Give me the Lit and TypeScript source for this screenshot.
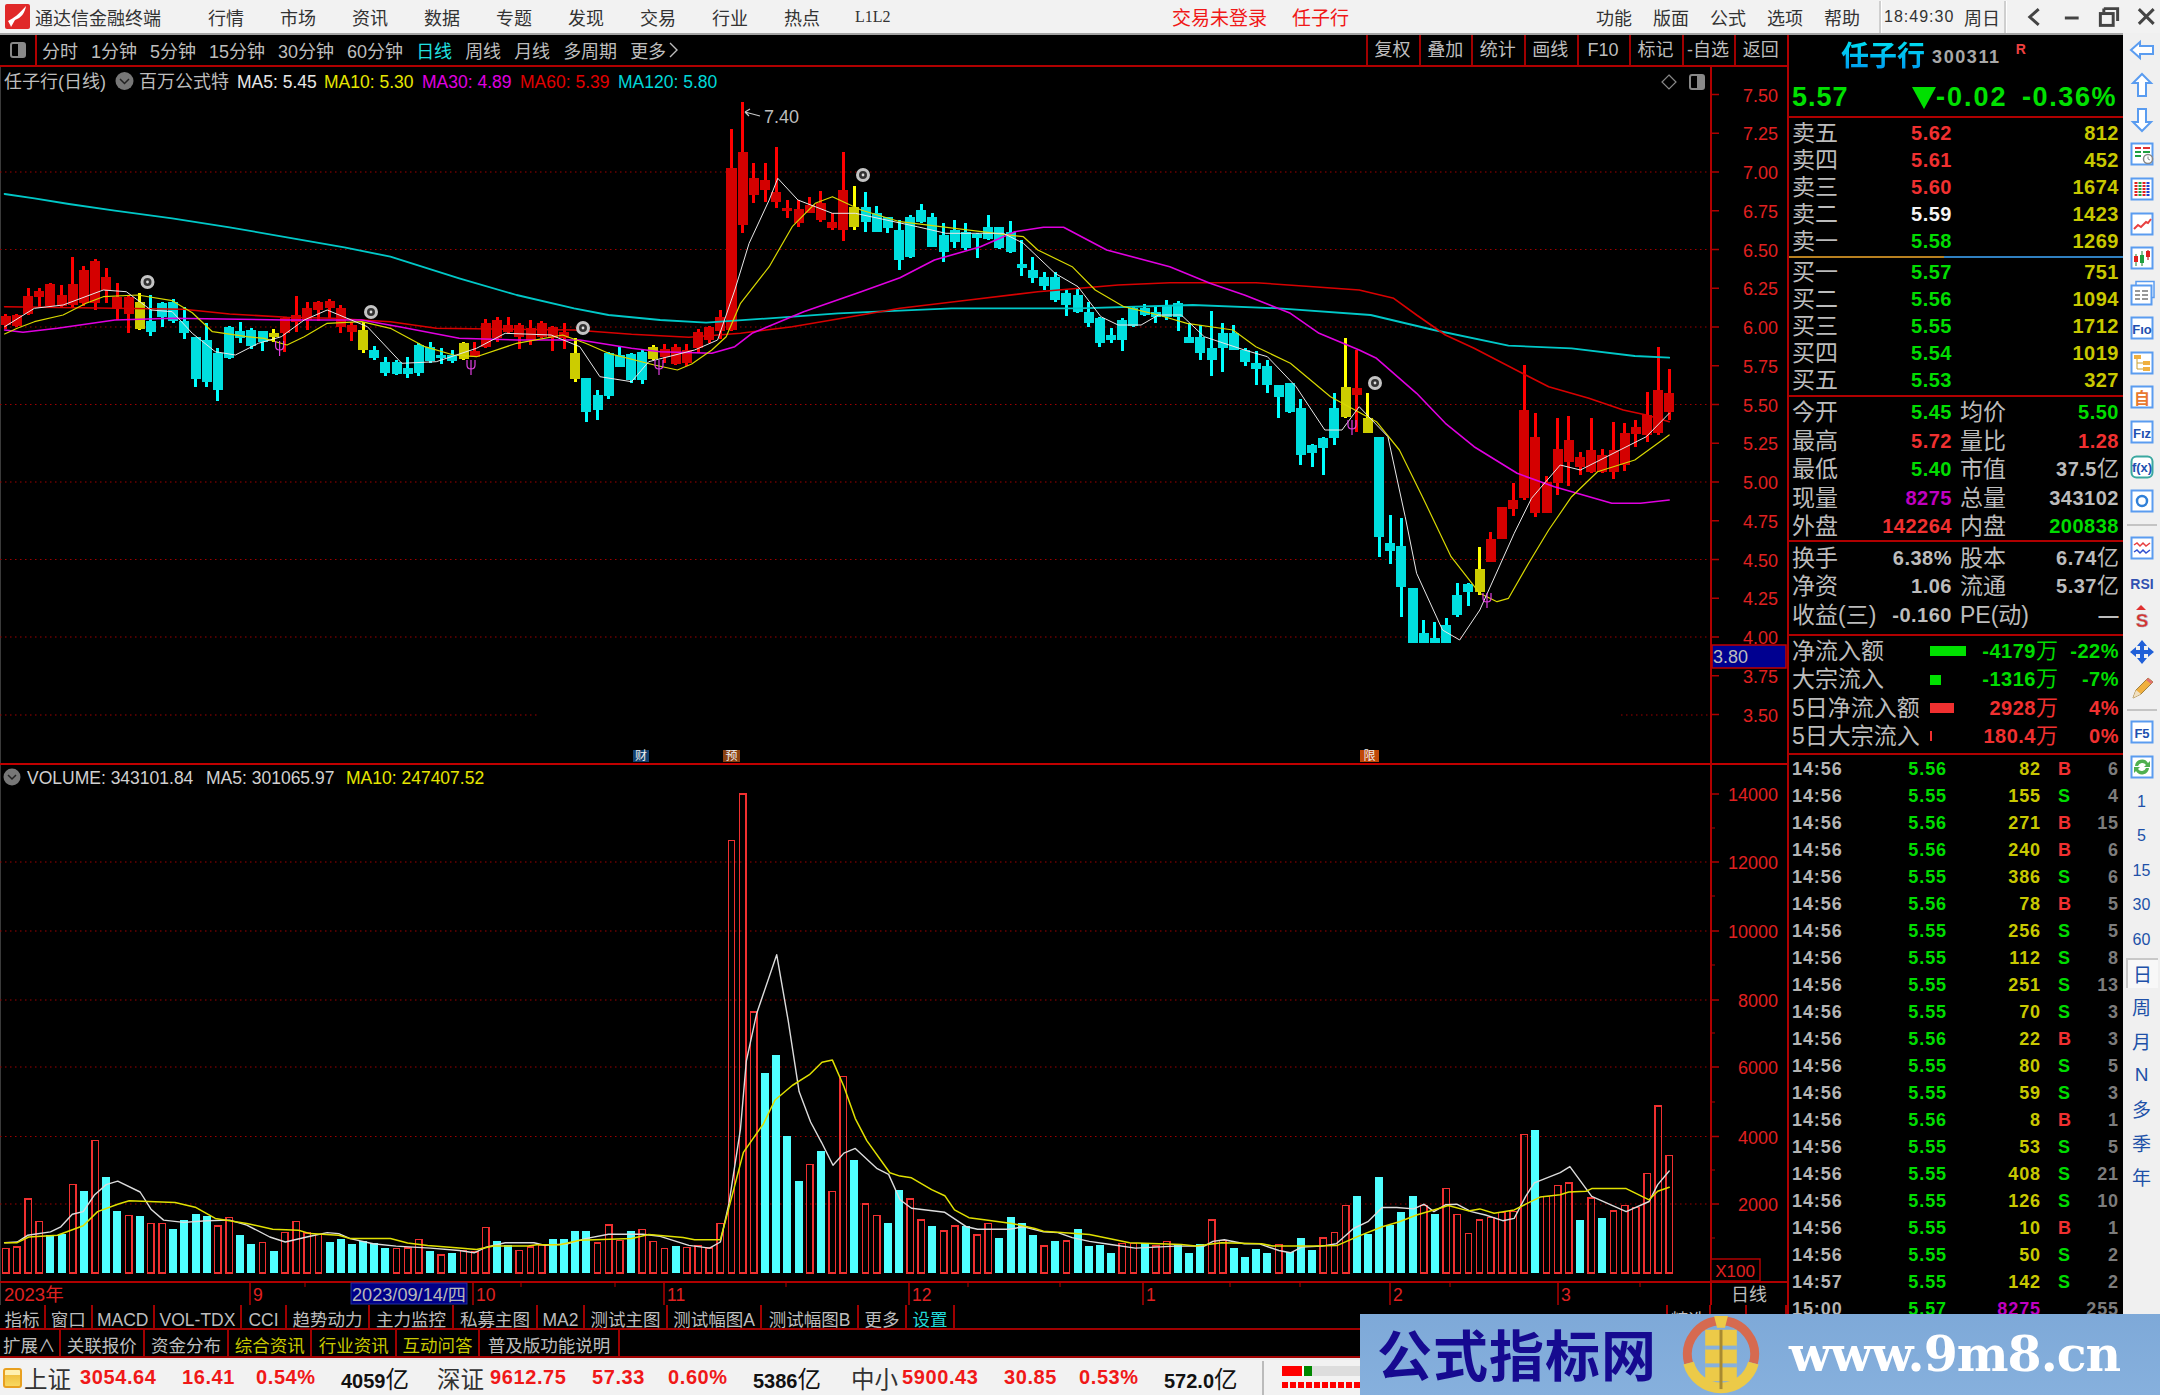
import { LitElement, html, svg, css } from "lit";
import { customElement } from "lit/decorators.js";

type Pt = [number, number];
const lx = (pts: number[], add = 0): Pt[] => {
  const o: Pt[] = [];
  for (let i = 0; i < pts.length; i += 2) o.push([pts[i] / 1.742, (pts[i + 1] + add) / 3]);
  return o;
};
const rx = (pts: number[], add = 0): Pt[] => {
  const o: Pt[] = [];
  for (let i = 0; i < pts.length; i += 2) o.push([900 + pts[i] / 1.742, (pts[i + 1] + add) / 3]);
  return o;
};
const vl = (pts: number[]): Pt[] => {
  const o: Pt[] = [];
  for (let i = 0; i < pts.length; i += 2) o.push([pts[i] / 1.742, 740 + pts[i + 1] / 2.958]);
  return o;
};
const vr = (pts: number[]): Pt[] => {
  const o: Pt[] = [];
  for (let i = 0; i < pts.length; i += 2) o.push([900 + pts[i] / 1.742, 740 + pts[i + 1] / 2.958]);
  return o;
};
const P = (a: Pt[]) => a.map((p) => p[0].toFixed(1) + "," + p[1].toFixed(1)).join(" ");

const MA120 = [
  ...lx([8,582,60,595,120,612,200,632,300,655,400,682,500,712,600,742,680,770,800,835,900,885,1000,925,1060,945,1150,960,1230,968,1280,962,1340,955,1460,940]),
  ...rx([0,932,90,925,310,925,510,915,660,925,820,945,930,990,1060,1037,1170,1045,1280,1068,1340,1073]),
];
const MA60 = [
  ...lx([8,920,200,925,320,928,400,942,500,952,580,955,680,965,760,985,1000,990,1100,1003,1200,1012,1290,1000,1380,980,1500,945]),
  ...rx([0,925,120,900,240,875,380,855,470,848,620,848,720,860,800,870,860,895,900,945,950,1005,1000,1045,1090,1125,1130,1160,1200,1195,1260,1230,1300,1245,1340,1265]),
];
const MA30 = [
  ...lx([8,990,40,997,100,985,200,960,300,955,500,960,630,960,700,982,800,1015,900,1020,1010,1020,1100,1045,1150,1055,1240,1060,1280,1040,1310,1000,1400,935,1500,875]),
  ...rx([0,833,60,780,140,740,200,695,250,682,285,682,360,750,470,800,540,850,600,885,680,940,730,1000,800,1050,830,1075,900,1180,950,1270,1000,1340,1075,1420,1140,1460,1240,1510,1290,1510,1340,1500]),
];
const MA10 = [
  ...lx([8,282,30,265,60,245,110,225,150,190,180,170,240,165,300,182,335,218,370,275,430,290,460,295,500,315,530,290,570,250,630,245,680,265,740,320,790,345,830,350,900,310,980,285,1020,310,1060,340,1140,375,1180,390,1205,372,1240,330,1265,290,1290,190,1340,80,1380,-40,1420,-110,1450,-130,1500,-90], 720),
  ...rx([0,-55,215,-10,240,30,300,80,340,150,390,200,450,225,500,250,580,270,620,320,680,370,750,470,830,545,870,630,910,770,960,950,1010,1060,1040,1085,1060,1075,1095,970,1130,870,1170,770,1215,695,1280,660,1340,585], 720),
];
const MA5 = [
  ...lx([8,260,60,205,110,195,180,150,220,155,263,210,300,215,335,280,375,335,410,345,450,310,490,290,530,240,570,210,640,260,700,370,760,365,830,325,880,280,960,285,1010,320,1045,410,1100,425,1130,365,1210,330,1250,300,1280,150,1305,10,1340,-120,1355,-185,1390,-120,1450,-80,1490,-80], 720),
  ...rx([30,-40,80,-20,180,-20,215,10,270,100,310,140,350,230,380,255,420,255,450,225,490,225,530,290,600,330,640,350,690,440,740,570,770,570,800,500,850,590,880,830,900,1000,945,1170,975,1200,1010,1110,1070,880,1100,775,1150,675,1185,690,1300,590,1340,520], 720),
];
const VMA5 = [
  ...vl([8,1487,30,1485,48,1465,88,1455,106,1440,126,1403,145,1395,165,1345,185,1315,205,1305,244,1337,263,1388,285,1420,320,1427,360,1422,400,1420,430,1435,470,1470,497,1485,540,1468,570,1457,590,1460,610,1475,650,1490,690,1497,720,1500,750,1503,800,1510,826,1517,847,1500,880,1487,930,1487,950,1495,990,1490,1020,1475,1060,1462,1120,1462,1150,1468,1200,1495,1236,1503,1255,1485,1270,1370,1290,1150,1300,950,1318,810,1353,635,1373,830,1392,1040,1412,1130,1431,1190,1451,1258,1470,1222,1490,1208,1528,1268,1548,1285]),
  ...vr([0,1360,20,1385,78,1397,116,1440,135,1447,190,1447,215,1440,250,1455,275,1457,300,1472,330,1483,370,1493,410,1503,480,1497,530,1497,545,1483,565,1478,600,1490,625,1490,660,1510,680,1517,700,1500,735,1497,760,1490,790,1445,815,1425,840,1383,865,1383,895,1387,913,1373,930,1395,950,1375,970,1373,995,1395,1020,1405,1050,1422,1070,1415,1090,1350,1105,1310,1150,1280,1167,1262,1205,1350,1265,1395,1305,1365,1320,1315,1340,1275]),
];
const VMA10 = [
  ...vl([8,1487,30,1487,50,1470,100,1465,145,1437,170,1395,205,1373,225,1363,305,1368,340,1382,375,1415,430,1430,475,1447,520,1450,540,1460,590,1465,610,1475,680,1475,710,1488,745,1495,800,1503,830,1507,860,1497,920,1497,935,1493,975,1493,1010,1480,1100,1475,1130,1463,1190,1472,1210,1478,1255,1478,1275,1350,1295,1220,1330,1135,1350,1065,1380,1022,1410,990,1432,953,1450,947,1470,1025,1490,1120,1510,1185,1550,1280]),
  ...vr([0,1290,20,1295,55,1330,78,1348,95,1390,120,1413,150,1420,195,1430,235,1445,250,1453,330,1463,400,1487,490,1492,515,1497,560,1487,630,1490,650,1497,720,1497,762,1495,800,1467,840,1440,870,1425,900,1405,940,1385,955,1377,990,1393,1010,1387,1035,1400,1070,1390,1090,1373,1115,1352,1150,1345,1165,1337,1195,1335,1205,1327,1265,1327,1305,1360,1320,1335,1340,1323]),
];

// type, wick top, body top, body bottom, wick bottom
const CANDLES: [string, number, number, number, number][] = [
  ["r",222,228,255,268],["r",222,225,258,260],["r",143,167,222,226],["r",145,152,172,200],["r",130,132,198,200],
  ["r",135,165,198,205],["r",50,132,195,205],["r",78,90,190,198],["r",58,62,188,210],["r",85,110,150,190],
  ["r",130,170,208,240],["r",165,170,222,280],["y",160,185,268,270],["c",165,243,275,288],["c",185,190,230,262],
  ["c",178,185,242,248],["c",200,243,280,298],["c",290,292,418,440],["c",250,300,425,440],["c",325,338,450,482],
  ["c",258,260,355,358],["c",247,273,295,310],["c",265,270,318,327],["c",272,272,305,332],["y",268,280,290,305],
  ["r",232,235,280,335],["r",168,225,245,275],["r",185,205,240,270],["r",183,185,210,242],["r",178,182,205,235],
  ["r",195,205,262,278],["r",245,255,275,302],["y",245,270,330,340],["c",317,330,355,360],["c",352,365,400,408],
  ["c",360,365,403,405],["c",352,385,403,413],["c",308,315,400,408],["c",307,320,362,370],["c",325,345,355,372],
  ["c",330,345,362,368],["y",307,310,358,360],["r",305,333,350,352],["r",237,250,320,325],["r",230,240,295,305],
  ["r",230,255,275,280],["r",250,255,290,328],["r",240,265,300,315],["r",243,250,290,295],["r",258,262,295,332],
  ["r",248,275,295,328],["y",293,340,418,425],["c",415,415,515,545],["c",450,465,510,540],["c",335,340,468,478],
  ["c",320,345,380,382],["c",340,342,420,428],["c",330,335,420,432],["y",315,320,358,360],["r",312,328,352,370],
  ["r",312,322,372,375],["r",312,330,370,378],["r",268,275,325,340],["r",258,262,300,308],["r",210,230,272,298],
  ["r",-332,-215,270,272],["r",-415,-265,-45,-20],["r",-230,-185,-135,-110],["r",-230,-180,-150,-115],["r",-280,-145,-115,-95],
  ["r",-120,-96,-86,-65],["r",-120,-92,-52,-40],["r",-130,-105,-80,-80],["r",-148,-110,-60,-55],["r",-80,-55,-35,-30],
  ["r",-265,-150,-30,2],["y",-162,-100,-40,-30],["c",-145,-100,-55,-25],["c",-102,-80,-25,-25],["c",-70,-70,-35,-20],
  ["c",-60,-30,60,90],["c",-75,-70,50,55],["c",-108,-90,-55,-50],["c",-80,-70,20,20],["c",-50,-15,35,65],
  ["c",-60,-30,5,25],["c",-50,-25,25,30],["c",-20,-17,-5,53],["c",-75,-40,-3,0],["c",-40,-38,25,28],
  ["c",-58,-25,35,40],["c",0,72,85,108],["c",50,90,115,130],["c",95,110,138,150],["c",95,112,180,185],
  ["c",150,160,195,228],["c",145,165,215,218],["c",185,215,250,260],["c",230,235,310,320],["c",265,285,300,310],
  ["c",235,240,300,332],["c",200,205,258,260],["c",192,205,225,228],["c",200,215,230,248],["c",180,198,230,240],
  ["c",183,188,230,272],["c",250,292,308,310],["c",255,290,340,360],["c",212,325,360,408],["c",248,280,325,395],
  ["c",255,278,330,330],["c",325,330,365,378],["c",332,370,388,435],["c",360,378,435,458],["c",435,435,472,535],
  ["c",428,430,515,518],["c",478,505,645,675],["c",612,615,640,680],["c",590,595,625,705],["c",460,505,595,615],
  ["y",293,442,532,535],["r",330,445,465,575],["y",460,535,578,580],["c",590,592,892,950],["c",825,908,932,972],
  ["c",833,918,1040,1130],["c",1045,1045,1210,1210],["c",1140,1180,1210,1210],["c",1145,1195,1210,1210],["c",1135,1155,1210,1210],
  ["c",1028,1065,1125,1130],["c",1028,1033,1055,1097],["y",922,988,1055,1065],["r",875,898,965,965],["r",802,802,898,898],
  ["r",730,780,808,828],["r",375,510,775,780],["r",518,592,820,830],["r",708,725,818,820],["r",535,628,730,765],
  ["r",528,600,665,738],["r",635,650,680,705],["r",535,630,695,700],["r",628,645,695,700],["r",545,630,695,718],
  ["r",550,578,675,692],["r",540,562,582,622],["r",455,525,585,605],["r",320,450,578,585],["r",388,460,515,540],
];
const VOL = [68,73,215,148,-108,-113,258,-238,388,-281,-180,166,-166,143,143,-126,-153,-171,-166,135,160,-109,-83,86,-60,116,148,115,110,-87,-96,-83,-90,-85,-70,68,70,95,-60,50,-55,63,58,130,-90,-78,63,73,78,-96,-96,-121,-121,85,138,93,-121,125,90,68,-76,71,76,70,143,1275,1413,768,-588,-641,-401,-268,317,-357,237,578,-330,200,166,-143,-243,215,153,-135,121,135,-135,108,143,-101,-163,-145,-110,76,-91,91,-126,-75,-78,-56,83,83,-86,76,90,-83,-56,-83,153,93,-70,-43,-68,-56,81,-58,-101,-65,100,116,195,-225,-113,-281,-138,-176,-225,195,-171,246,170,113,153,161,175,178,406,-420,223,255,263,-153,218,-158,180,195,190,290,490,343];

const X = (i: number) => 5.8 + 11.165 * i;
const Y = (v: number) => 240 + v / 3;
const PY = (p: number) => 172 + (7 - p) * 155;
const MAIN_LABELS = [7.5,7.25,7,6.75,6.5,6.25,6,5.75,5.5,5.25,5,4.75,4.5,4.25,4,3.75,3.5];
const MAIN_GRID = [7,6.5,6,5.5,5,4.5,4];
const VOL_LABELS: [string, number][] = [["14000",794],["12000",862],["10000",931],["8000",1000],["6000",1067],["4000",1136.5],["2000",1204]];
const DATE_MAJOR: [string, number][] = [["9",250],["10",473],["11",664],["12",909],["1",1143],["2",1390],["3",1558]];
const DATE_MINOR = [305,422,521,615,786,968,1060,1230,1300,1450,1640];
const RINGS: Pt[] = [[147.5,282],[371,312],[583,328],[863,175],[1375,383]];
const PSI: Pt[] = [[279.6,348],[471,367],[659,367],[1352,427],[1487,600]];

const MENU = ["行情","市场","资讯","数据","专题","发现","交易","行业","热点"];
const TOOLS: [string, boolean][] = [["分时",false],["1分钟",false],["5分钟",false],["15分钟",false],["30分钟",false],["60分钟",false],["日线",true],["周线",false],["月线",false],["多周期",false]];
const TOOLS_R = ["复权","叠加","统计","画线","F10","标记","-自选","返回"];
const TAB1: [string, number, string][] = [["指标",46,""],["窗口",46.5,""],["MACD",62.5,""],["VOL-TDX",87,""],["CCI",45,""],["趋势动力",83,""],["主力监控",84,""],["私募主图",84,""],["MA2",47,""],["测试主图",83,""],["测试幅图A",94,""],["测试幅图B",97,""],["更多",48,""],["设置",48,"cy"]];
const TAB2: [string, number, string][] = [["扩展∧",60.6,""],["关联报价",84.4,""],["资金分布",84,""],["综合资讯",83.5,"ye"],["行业资讯",84.5,"ye"],["互动问答",83,"ye"],["普及版功能说明",140,""]];
const SELL: [string,string,string,string][] = [["卖五","5.62","r","812"],["卖四","5.61","r","452"],["卖三","5.60","r","1674"],["卖二","5.59","w","1423"],["卖一","5.58","g","1269"]];
const BUY: [string,string,string,string][] = [["买一","5.57","g","751"],["买二","5.56","g","1094"],["买三","5.55","g","1712"],["买四","5.54","g","1019"],["买五","5.53","g","327"]];
const STATS: string[][] = [["今开","5.45","g","均价","5.50","g"],["最高","5.72","r","量比","1.28","r"],["最低","5.40","g","市值","37.5亿","s"],["现量","8275","m","总量","343102","s"],["外盘","142264","r","内盘","200838","g"]];
const STATS2: string[][] = [["换手","6.38%","s","股本","6.74亿","s"],["净资","1.06","s","流通","5.37亿","s"],["收益(三)","-0.160","s","PE(动)","—","s"]];
const FLOW: [string,number,string,string,string][] = [["净流入额",36,"g","-4179万","-22%"],["大宗流入",11,"g","-1316万","-7%"],["5日净流入额",24,"r","2928万","4%"],["5日大宗流入",2,"r","180.4万","0%"]];
const T1 = "14:56";
const TICKS: [string,string,string,string,string][] = [
  [T1,"5.56","82","B","6"],[T1,"5.55","155","S","4"],[T1,"5.56","271","B","15"],[T1,"5.56","240","B","6"],[T1,"5.55","386","S","6"],
  [T1,"5.56","78","B","5"],[T1,"5.55","256","S","5"],[T1,"5.55","112","S","8"],[T1,"5.55","251","S","13"],[T1,"5.55","70","S","3"],
  [T1,"5.56","22","B","3"],[T1,"5.55","80","S","5"],[T1,"5.55","59","S","3"],[T1,"5.56","8","B","1"],[T1,"5.55","53","S","5"],
  [T1,"5.55","408","S","21"],[T1,"5.55","126","S","10"],[T1,"5.55","10","B","1"],[T1,"5.55","50","S","2"],["14:57","5.55","142","S","2"],["15:00","5.57","8275","","255"],
];
const BLUE = "#5a9cf0";
const frame = (inner: unknown) => svg`<rect x="3.5" y="3.5" width="21" height="21" fill="#fff" stroke=${BLUE} stroke-width="2"/>${inner}`;
const ICONS: unknown[] = [
  svg`<path d="M3 14 L12 6 V10 H25 V18 H12 V22 Z" fill="#fff" stroke=${BLUE} stroke-width="2"/>`,
  svg`<path d="M14 3 L23 12 H18 V25 H10 V12 H5 Z" fill="#fff" stroke=${BLUE} stroke-width="2"/>`,
  svg`<path d="M14 25 L23 16 H18 V3 H10 V16 H5 Z" fill="#fff" stroke=${BLUE} stroke-width="2"/>`,
  frame(svg`<path d="M7 8h6M15 8h7" stroke="#e03030" stroke-width="2"/><path d="M7 12h6M15 12h7" stroke="#20a040" stroke-width="2"/><path d="M7 16h6" stroke="#20a040" stroke-width="2"/><circle cx="20" cy="19" r="4.5" fill="#fff" stroke="#888" stroke-width="1.5"/><path d="M20 16.5V19l2 1" stroke="#888" fill="none"/>`),
  frame(svg`<path d="M8 7v14" stroke="#e02020" stroke-width="3" stroke-dasharray="2 1"/><path d="M12 7v14" stroke="#20a040" stroke-width="3" stroke-dasharray="2 1"/><path d="M16 7v14" stroke="#e02020" stroke-width="3" stroke-dasharray="2 1"/><path d="M20 7v14" stroke="#2040d0" stroke-width="3" stroke-dasharray="2 1"/>`),
  frame(svg`<path d="M6 19 L10 15 L13 17 L18 12 L20 13 L23 9" fill="none" stroke="#e84040" stroke-width="2"/>`),
  frame(svg`<path d="M8 10v12M14 7v15" stroke="#208030"/><rect x="6" y="12" width="4" height="6" fill="#e02020"/><rect x="12" y="11" width="4" height="8" fill="#20a040"/><path d="M20 6v10" stroke="#a00"/><rect x="18" y="7" width="4" height="6" fill="#e02020"/>`),
  svg`<rect x="8" y="2.5" width="18" height="16" fill="#fff" stroke=${BLUE} stroke-width="1.5"/><rect x="3.5" y="6.5" width="20" height="19" fill="#fff" stroke=${BLUE} stroke-width="2"/><path d="M7 12h5M14 12h6M7 16h5M14 16h6M7 20h5M14 20h6" stroke="#777" stroke-width="1.5"/>`,
  frame(svg`<text x="14" y="19.5" class="ic" text-anchor="middle">Fıo</text>`),
  frame(svg`<path d="M9 9v11h6M9 14h6" stroke="#c9a030" fill="none"/><rect x="6" y="6" width="7" height="4" fill="#f0b040"/><rect x="15" y="12" width="7" height="4" fill="#f0b040"/><rect x="15" y="18" width="7" height="4" fill="#f0b040"/>`),
  frame(svg`<text x="14" y="20.5" class="iz" text-anchor="middle">自</text>`),
  frame(svg`<text x="14" y="19.5" class="ic" text-anchor="middle">Fız</text>`),
  svg`<rect x="3.5" y="3.5" width="21" height="21" rx="5" fill="#fff" stroke="#3aa8a0" stroke-width="2"/><text x="14" y="19" class="ic" text-anchor="middle">f(x)</text>`,
  frame(svg`<circle cx="14" cy="14" r="5" fill="none" stroke="#3080d8" stroke-width="2.5"/>`),
  null,
  frame(svg`<path d="M6 11 L9 9 L12 12 L15 9 L18 12 L22 9" fill="none" stroke="#e84040" stroke-width="1.5"/><path d="M6 18 L9 16 L12 19 L15 16 L18 19 L22 16" fill="none" stroke="#3050d0" stroke-width="1.5"/>`),
  svg`<text x="14" y="20" class="ir" text-anchor="middle">RSI</text>`,
  svg`<path d="M13 2 L18 7 H8 Z" fill="#e03030"/><text x="14" y="24" class="is" text-anchor="middle">S</text>`,
  svg`<path d="M14 2 L19 8 H16 V12 H20 V9 L26 14 L20 19 V16 H16 V20 H19 L14 26 L9 20 H12 V16 H8 V19 L2 14 L8 9 V12 H12 V8 H9 Z" fill="#2060d8"/>`,
  svg`<path d="M5 25 L8 17 L20 5 L25 9 L13 21 Z" fill="#f0b040" stroke="#a08040"/><path d="M5 25 L8 17 L13 21 Z" fill="#f0e0c0"/><path d="M20 5 L25 9 L23 11 L18 7 Z" fill="#e07070"/>`,
  null,
  frame(svg`<text x="14" y="19.5" class="ic" text-anchor="middle">F5</text>`),
  frame(svg`<path d="M7 13 A7 7 0 0 1 20 10 L22 8 V14 H16 L18 12 A4.5 4.5 0 0 0 10 13 Z" fill="#50b050"/><path d="M21 15 A7 7 0 0 1 8 18 L6 20 V14 H12 L10 16 A4.5 4.5 0 0 0 18 15 Z" fill="#50b050"/>`),
];

const logoArc = (r: number, a0: number, a1: number) => {
  const rad = (d: number) => (d * Math.PI) / 180;
  const x0 = 40 + r * Math.cos(rad(a0)), y0 = 41 + r * Math.sin(rad(a0));
  const x1 = 40 + r * Math.cos(rad(a1)), y1 = 41 + r * Math.sin(rad(a1));
  return `M${x0.toFixed(1)} ${y0.toFixed(1)} A${r} ${r} 0 ${Math.abs(a1 - a0) > 180 ? 1 : 0} 1 ${x1.toFixed(1)} ${y1.toFixed(1)}`;
};

@customElement("app-root")
export class AppRoot extends LitElement {
  static styles = css`
    :host { display: block; position: relative; width: 2160px; height: 1395px; overflow: hidden; background: #000;
      font-family: "Liberation Sans", "Noto Sans CJK SC", sans-serif; }
    .title { height: 33px; border-bottom: 2px solid #a4a4a4; background: #f2f2f2; display: flex; align-items: center; color: #333; font-size: 18px; white-space: nowrap; overflow: hidden; }
    .logo { margin-left: 5px; width: 25px; height: 25px; flex: none; }
    .appname { margin-left: 5px; width: 173px; flex: none; }
    .menu { display: flex; gap: 36px; flex: none; }
    .menu span { width: 36px; }
    .l12 { margin-left: 35px; font-family: "Liberation Serif", serif; font-size: 16px; width: 36px; flex: none; }
    .cen { margin-left: 281px; color: #f01818; font-size: 19px; width: 95px; flex: none; }
    .cen2 { margin-left: 25px; color: #f01818; font-size: 19px; width: 57px; flex: none; }
    .rm { margin-left: 247px; display: flex; gap: 21px; flex: none; }
    .rm span { width: 36px; }
    .vsep { width: 2px; height: 32px; background: #cfcfcf; margin-left: 19px; border-right: 1px solid #fff; flex: none; }
    .clock { margin-left: 2px; width: 80px; font-size: 16px; letter-spacing: 1px; flex: none; }
    .wk { width: 36px; flex: none; }
    .vsep2 { margin-left: 4px; }
    .win { width: 37.5px; height: 28px; flex: none; }
    .w1 { margin-left: 8px; }
    .main { display: flex; height: 1323px; }
    .left { width: 1787px; flex: none; display: flex; flex-direction: column; }
    .toolbar { height: 30px; border-bottom: 2px solid #b00000; display: flex; align-items: center; color: #bdbdbd; font-size: 18px; white-space: nowrap; }
    .tbicon { width: 35px; height: 30px; border-right: 2px solid #b00000; display: flex; align-items: center; justify-content: center; flex: none; }
    .tbicon i { display: block; width: 16px; height: 16px; border: 2px solid #888; border-radius: 3px; box-sizing: border-box; background: linear-gradient(90deg, #000 50%, #888 50%); }
    .tools { display: flex; gap: 13px; margin-left: 5px; align-items: center; }
    .tools .on { color: #20e0e0; }
    .tools .more { display: flex; align-items: center; gap: 3px; }
    .tools .more svg { width: 9px; height: 18px; }
    .toolsr { margin-left: auto; display: flex; height: 100%; }
    .toolsr span { width: 52.6px; box-sizing: border-box; border-left: 2px solid #a00000; padding-right: 2px; text-align: center; line-height: 30px; }
    .chart { display: block; width: 1787px; height: 1238px; flex: none; }
    .tabs { display: flex; color: #bdbdbd; font-size: 17.5px; border-bottom: 2px solid #a00000; white-space: nowrap; box-sizing: border-box; }
    .t1 { height: 25px; line-height: 30px; }
    .t2 { height: 28px; line-height: 33px; }
    .tabs span { box-sizing: border-box; border-right: 2px solid #a00000; text-align: center; flex: none; }
    .tabs .cy { color: #20d8d8; }
    .tabs .ye { color: #c8c800; }
    .tabs .gapl { margin-left: auto; border-left: 2px solid #a00000; }
    .panel { width: 336px; flex: none; box-sizing: border-box; border-left: 2px solid #b00000; height: 100%; overflow: hidden; color: #bcbcbc; font-size: 23px; white-space: nowrap; }
    .hd { height: 81px; border-bottom: 2px solid #b00000; display: flex; flex-direction: column; }
    .nm { height: 43px; box-sizing: border-box; padding: 0 0 5px 52px; display: flex; align-items: center; }
    .nm b { font-size: 28px; background: linear-gradient(180deg, #00f0f0, #0090f0); -webkit-background-clip: text; background-clip: text; color: transparent; }
    .nm em { font-style: normal; font-weight: bold; font-size: 18px; letter-spacing: 1.6px; color: #a8a8a8; margin: 6px 0 0 7px; }
    .nm sup { font-size: 14px; font-weight: bold; color: #f04040; margin: -10px 0 0 15px; line-height: 1; }
    .pr { display: flex; align-items: center; color: #00e000; font-weight: bold; font-size: 27px; padding-left: 3px; height: 37px; margin-top: 1px; }
    .pr .a { width: 120px; letter-spacing: 1px; flex: none; }
    .pr .b { width: 24px; height: 22px; flex: none; }
    .pr .b svg { display: block; width: 24px; height: 22px; }
    .pr .c { width: 86px; letter-spacing: 2px; flex: none; }
    .pr .d { letter-spacing: 1.6px; flex: none; }
    .num { font-weight: bold; font-size: 20px; letter-spacing: .5px; }
    .num .u { font-weight: normal; font-size: 22px; letter-spacing: 0; }
    .book { padding-left: 3px; }
    .bs1 { padding-top: 2px; padding-bottom: 1px; }
    .bs2 { padding-top: .5px; padding-bottom: 1.5px; }
    .br { display: grid; grid-template-columns: 60px 100px 1fr; height: 27px; line-height: 27px; padding-right: 4px; }
    .v { text-align: right; }
    .line1 { height: 2px; background: linear-gradient(90deg, #b88020 0 155px, #3080c0 155px); }
    .redl { height: 2px; background: #b00000; }
    .st { padding-left: 3px; padding-right: 4px; }
    .sr { display: grid; grid-template-columns: 60px 100px 68px 1fr; height: 28.6px; line-height: 30.6px; }
    .sr .l2 { padding-left: 8px; }
    .st2 .sr { height: 28.5px; line-height: 30px; }
    .st2 { height: 92px; padding-top: 1px; box-sizing: border-box; }
    .fl { padding: 0 4px 0 3px; height: 117px; box-sizing: border-box; }
    .fr { display: grid; grid-template-columns: 138px 128px 1fr; height: 28.4px; line-height: 30.4px; }
    .fv { display: flex; align-items: center; justify-content: space-between; }
    .fv i { display: block; height: 10px; }
    .ticks { padding: 1px 4px 0 3px; font-weight: bold; font-size: 18px; }
    .tr { display: grid; grid-template-columns: 115px 40px 94px 38px 40px; height: 27px; line-height: 27px; letter-spacing: .9px; }
    .tr .tm { color: #b4b4b4; }
    .tr .bs { padding-left: 17px; }
    .tr .ct { text-align: right; color: #7c7c7c; }
    .g { color: #00dc00; } .r { color: #f03030; } .w { color: #f4f4f4; } .m { color: #c000c0; } .s { color: #bcbcbc; } .y { color: #c8c800; }
    .side { width: 37px; flex: none; background: #f0f0f0; display: flex; flex-direction: column; align-items: center; margin-top: -2px; color: #2050a8; }
    .si { height: 34.7px; width: 37px; flex: none; display: flex; align-items: center; justify-content: center; }
    .si svg { width: 28px; height: 28px; }
    .sp1 { height: 12px; flex: none; width: 30px; display: flex; align-items: center; }
    .sp2 { height: 11px; flex: none; width: 30px; display: flex; align-items: center; }
    .sp1::before, .sp2::before { content: ""; display: block; width: 100%; height: 2px; background: #c4c4c4; }
    .sn { font-size: 16px; height: 34.5px; }
    .sc { font-size: 19px; height: 34px; }
    .sday { margin-top: 1px; height: 30px; width: 32px; border-top: 2px solid #c8c8c8; border-left: 2px solid #c8c8c8; box-sizing: border-box; margin-bottom: 2px; background: #f8f8f8; }
    .ic { font: 700 13px "Liberation Sans", sans-serif; fill: #2050b0; }
    .iz { font: 700 16px "Noto Sans CJK SC", sans-serif; fill: #e87830; }
    .ir { font: 700 14px "Liberation Sans", sans-serif; fill: #3050b0; }
    .is { font: 700 19px "Liberation Sans", sans-serif; fill: #d83030; stroke: #aaa; stroke-width: .4px; }
    .status { height: 37px; box-sizing: border-box; border-top: 2px solid #e8e8e8; background: #f2f2f2; display: flex; align-items: center; color: #222; white-space: nowrap; }
    .sti { margin-left: 3px; width: 19px; height: 20px; box-sizing: border-box; flex: none; border: 2px solid #e8a020; border-radius: 3px; background: linear-gradient(#fff0b0 30%, #f0c040 30%, #f8d860); margin-right: 2px; }
    .status span { flex: none; display: block; }
    .status .cjk { font-size: 23.5px; color: #333; }
    .status .rn { font-size: 20px; font-weight: bold; letter-spacing: .6px; color: #f01818; }
    .status .bk { font-size: 20px; font-weight: bold; color: #111; }
    .status .bk u { text-decoration: none; font-size: 23.5px; font-weight: normal; }
    .status .bar { width: 2px; height: 34px; background: #bbb; margin-left: 0; }
    .status .ind { margin-left: 18px; width: 90px; height: 24px; background: linear-gradient(90deg, #f00 0 20px, #fff 20px 22px, #080 22px 30px, #ddd 30px) 0 0 / 100% 10px no-repeat, repeating-linear-gradient(90deg, #f00 0 6px, #f2f2f2 6px 8px) 0 16px / 100% 6px no-repeat; }
    .wm { position: absolute; left: 1360px; top: 1314px; width: 800px; height: 81px; background: linear-gradient(180deg, #7ea9d8, #86b0dd); display: flex; align-items: center; white-space: nowrap; }
    .wmt { margin: -4px 0 0 17px; width: 290px; font: 700 55px "Noto Sans CJK SC", sans-serif; color: #160a90; letter-spacing: 1px; line-height: 81px; }
    .wmi { width: 80px; height: 81px; flex: none; margin-left: 14px; }
    .wmu { margin: -2px 0 0 28px; font: 700 49px "DejaVu Serif", serif; color: #fff; letter-spacing: -1px; }
    .tm-lbl { font: 18px "Liberation Sans", "Noto Sans CJK SC", sans-serif; fill: #bdbdbd; }
    .ln { fill: none; stroke-linejoin: round; stroke-linecap: round; }
    .ax { font: 18px "Liberation Sans", sans-serif; fill: #e02020; }
    .lb { font: 17.5px "Liberation Sans", "Noto Sans CJK SC", sans-serif; }
    .tag { font: 12px "Noto Sans CJK SC", sans-serif; fill: #eee; }
  `;

  private num(s: string) {
    const m = s.match(/^(.*?)([亿万])$/);
    return m ? html`${m[1]}<span class="u">${m[2]}</span>` : s;
  }

  private chart() {
    const bars = CANDLES.map((c, i) => {
      const [t, wt, bt, bb, wb] = c;
      const x = X(i);
      const wc = t === "r" ? "#ff0000" : t === "c" ? "#00ffff" : "#ffff00";
      const bc = t === "r" ? "#d40000" : t === "c" ? "#00dede" : "#cccc00";
      const bw = t === "r" && i === 65 ? 11 : 10;
      const wick = Math.min(Y(wb), 643);
      const btY = Y(bt);
      const bbY = Math.min(Y(bb), 643);
      return svg`<rect x=${x - 1.5} y=${Y(wt)} width="3" height=${Math.max(wick - Y(wt), 1)} fill=${wc}/><rect x=${x - bw / 2} y=${btY} width=${bw} height=${Math.max(bbY - btY, 2)} fill=${bc}/>`;
    });
    const vols = VOL.map((v, i) => {
      const top = 1271.7 - Math.abs(v) * 0.338;
      const h = 1273 - top;
      const x = X(i);
      return v > 0
        ? svg`<rect x=${x - 3.2} y=${top} width="6.4" height=${h} fill="none" stroke="#f03030" stroke-width="1.4"/>`
        : svg`<rect x=${x - 4} y=${top} width="8" height=${h} fill="#50ffff"/>`;
    });
    return svg`
      <svg class="chart" viewBox="0 67 1787 1238" xmlns="http://www.w3.org/2000/svg">
        <line x1="0.5" y1="67" x2="0.5" y2="1305" stroke="#3a3a3a"/>
        ${MAIN_GRID.map((p) => svg`<line x1="0" x2="1711" y1=${PY(p)} y2=${PY(p)} stroke="#a00000" stroke-dasharray="1.5 3.5"/>`)}
        <line x1="0" x2="537" y1="715" y2="715" stroke="#a00000" stroke-dasharray="1.5 3.5"/>
        <line x1="1621" x2="1711" y1="715" y2="715" stroke="#a00000" stroke-dasharray="1.5 3.5"/>
        ${[862,931,1000,1067,1136.5,1204].map((y) => svg`<line x1="0" x2="1711" y1=${y} y2=${y} stroke="#a00000" stroke-dasharray="1.5 3.5"/>`)}
        <g shape-rendering="crispEdges">${bars}</g>
        <polyline class="ln" points=${P(MA120)} stroke="#00c8c8" stroke-width="1.8"/>
        <polyline class="ln" points=${P(MA60)} stroke="#d80000" stroke-width="1.6"/>
        <polyline class="ln" points=${P(MA30)} stroke="#e000e0" stroke-width="1.6"/>
        <polyline class="ln" points=${P(MA10)} stroke="#d8d800" stroke-width="1.2"/>
        <polyline class="ln" points=${P(MA5)} stroke="#e8e8e8" stroke-width="1"/>
        ${RINGS.map(([x, y]) => svg`<circle cx=${x} cy=${y} r="5.5" fill="#333" stroke="#c4c4c4" stroke-width="3"/><circle cx=${x} cy=${y} r="1.4" fill="#ddd"/>`)}
        ${PSI.map(([x, y]) => svg`<path d="M${x - 4} ${y - 7} v5 q0 4 4 4 q4 0 4 -4 v-5 M${x} ${y - 7} v15" fill="none" stroke="#e040e0" stroke-width="1.2"/>`)}
        <path d="M760 116 L745 112 M745 112 l5 -3 M745 112 l4 4" fill="none" stroke="#c8c8c8" stroke-width="1.2"/>
        <text x="764" y="123" class="ax" style="fill:#bdbdbd">7.40</text>

        <text x="4" y="88" class="tm-lbl">任子行(日线)</text>
        <circle cx="124.5" cy="81" r="9" fill="#777"/><path d="M120 79 l4.5 4.5 l4.5 -4.5" stroke="#222" stroke-width="1.5" fill="none"/>
        <text x="139" y="88" class="tm-lbl">百万公式特</text>
        <text x="237" y="88" class="lb" fill="#e8e8e8">MA5: 5.45</text>
        <text x="324" y="88" class="lb" fill="#e6e600">MA10: 5.30</text>
        <text x="422" y="88" class="lb" fill="#e000e0">MA30: 4.89</text>
        <text x="520" y="88" class="lb" fill="#e00000">MA60: 5.39</text>
        <text x="618" y="88" class="lb" fill="#00d8d8">MA120: 5.80</text>
        <path d="M1669 75 l7 7 l-7 7 l-7 -7 Z" fill="none" stroke="#888" stroke-width="1.2"/>
        <rect x="1690" y="75" width="14" height="14" rx="2" fill="none" stroke="#888" stroke-width="2"/><rect x="1697" y="76" width="6" height="12" fill="#888"/>

        <rect x="633" y="750" width="16" height="12" fill="#12406e"/><text x="641" y="760" class="tag" text-anchor="middle">财</text>
        <rect x="723" y="750" width="17" height="12" fill="#8a4010"/><text x="731.5" y="760" class="tag" text-anchor="middle">预</text>
        <rect x="1360" y="750" width="19" height="12" fill="#c04808"/><text x="1369.5" y="760" class="tag" text-anchor="middle">限</text>

        <line x1="0" x2="1787" y1="764" y2="764" stroke="#c00000" stroke-width="2"/>
        <circle cx="12" cy="777" r="8.5" fill="#777"/><path d="M8 775 l4 4 l4 -4" stroke="#222" stroke-width="1.5" fill="none"/>
        <text x="27" y="784" class="lb" fill="#d0d0d0">VOLUME: 343101.84</text>
        <text x="206" y="784" class="lb" fill="#d0d0d0">MA5: 301065.97</text>
        <text x="346" y="784" class="lb" fill="#e6e600">MA10: 247407.52</text>

        <g shape-rendering="crispEdges">${vols}</g>
        <polyline class="ln" points=${P(VMA5)} stroke="#dcdcdc" stroke-width="1.4"/>
        <polyline class="ln" points=${P(VMA10)} stroke="#e0e000" stroke-width="1.5"/>

        <line x1="1711" x2="1711" y1="67" y2="1305" stroke="#b00000" stroke-width="2"/>
        ${MAIN_LABELS.map((p) => svg`<line x1="1711" x2="1719" y1=${PY(p)} y2=${PY(p)} stroke="#b00000" stroke-width="1.5"/><text x="1778" y=${PY(p) + 7} class="ax" text-anchor="end">${p.toFixed(2)}</text>`)}
        ${VOL_LABELS.map(([t, y]) => svg`<line x1="1711" x2="1719" y1=${y} y2=${y} stroke="#b00000" stroke-width="1.5"/><text x="1778" y=${y + 7} class="ax" text-anchor="end">${t}</text>`)}
        ${[828,896,965,1033,1102,1170,1238].map((y) => svg`<line x1="1711" x2="1715" y1=${y} y2=${y} stroke="#b00000"/>`)}
        <rect x="1712" y="645" width="74" height="23" fill="#000090" stroke="#c00000" stroke-width="1.5"/>
        <text x="1713" y="663" class="ax" style="fill:#bdbdbd">3.80</text>
        <rect x="1711" y="1259" width="49" height="22" fill="#000" stroke="#b00000" stroke-width="1.5"/>
        <text x="1735" y="1277" class="ax" text-anchor="middle" style="font-size:17px">X100</text>

        <line x1="0" x2="1787" y1="1282" y2="1282" stroke="#b00000" stroke-width="2"/>
        ${DATE_MINOR.map((x) => svg`<line x1=${x} x2=${x} y1="1283" y2="1287" stroke="#b00000"/>`)}
        ${DATE_MAJOR.map(([t, x]) => svg`<line x1=${x} x2=${x} y1="1282" y2="1305" stroke="#b00000" stroke-width="1.5"/><text x=${x + 3} y="1301" class="lb" fill="#e02020">${t}</text>`)}
        <text x="4" y="1301" class="lb" fill="#e02020" style="font-size:18.5px">2023年</text>
        <rect x="351" y="1283" width="116" height="21" fill="#000088" stroke="#2030a0"/>
        <text x="352" y="1301" class="lb" fill="#b8b8b8" textLength="114" lengthAdjust="spacingAndGlyphs">2023/09/14/四</text>
        <text x="1749" y="1301" class="tm-lbl" text-anchor="middle">日线</text>
      </svg>`;
  }

  render() {
    return html`
      <div class="title">
        <svg class="logo" viewBox="0 0 25 25"><rect width="25" height="25" rx="2" fill="#e02828"/><path d="M3 17 C9 14 14 10 21 2 C20 9 16 14 10 16 L6 23 C5 20 4 19 3 17 Z" fill="#fff"/></svg>
        <span class="appname">通达信金融终端</span>
        <div class="menu">${MENU.map((m) => html`<span>${m}</span>`)}</div>
        <span class="l12">L1L2</span>
        <span class="cen">交易未登录</span><span class="cen2">任子行</span>
        <div class="rm">${["功能","版面","公式","选项","帮助"].map((m) => html`<span>${m}</span>`)}</div>
        <i class="vsep"></i>
        <span class="clock">18:49:30</span><span class="wk">周日</span>
        <i class="vsep vsep2"></i>
        <svg class="win w1" viewBox="0 0 38 28"><path d="M24 6 L15 14 L24 22" fill="none" stroke="#444" stroke-width="3"/></svg>
        <svg class="win" viewBox="0 0 38 28"><path d="M12 15 H26" stroke="#444" stroke-width="3"/></svg>
        <svg class="win" viewBox="0 0 38 28"><path d="M14 5.5 H28 V18 M14 5.5 V9" fill="none" stroke="#444" stroke-width="3"/><rect x="10.5" y="10.5" width="13" height="12" fill="none" stroke="#444" stroke-width="3"/></svg>
        <svg class="win" viewBox="0 0 38 28"><path d="M11 6 L26 21 M26 6 L11 21" stroke="#444" stroke-width="3"/></svg>
      </div>
      <div class="main">
        <div class="left">
          <div class="toolbar">
            <div class="tbicon"><i></i></div>
            <div class="tools">
              ${TOOLS.map(([t, on]) => html`<span class=${on ? "on" : ""}>${t}</span>`)}
              <span class="more">更多<svg viewBox="0 0 9 18"><path d="M1 2 L8 9 L1 16" fill="none" stroke="#bdbdbd" stroke-width="1.4"/></svg></span>
            </div>
            <div class="toolsr">${TOOLS_R.map((t) => html`<span>${t}</span>`)}</div>
          </div>
          ${this.chart()}
          <div class="tabs t1">
            ${TAB1.map(([t, w, c]) => html`<span class=${c} style="width:${w}px">${t}</span>`)}
            <span class="gapl" style="width:45px">精选</span><span style="width:36px"></span><span style="width:40px"></span>
          </div>
          <div class="tabs t2">${TAB2.map(([t, w, c]) => html`<span class=${c} style="width:${w}px">${t}</span>`)}</div>
        </div>
        <div class="panel">
          <div class="hd">
            <div class="nm"><b>任子行</b><em>300311</em><sup>R</sup></div>
            <div class="pr"><span class="a">5.57</span><span class="b"><svg viewBox="0 0 24 22"><path d="M0 0 H24 L12 22 Z" fill="#00e000"/></svg></span><span class="c">-0.02</span><span class="d">-0.36%</span></div>
          </div>
          <div class="book bs1">${SELL.map(([a, p, c, v]) => html`<div class="br"><span>${a}</span><span class="v num ${c}">${p}</span><span class="v num y">${v}</span></div>`)}</div>
          <div class="line1"></div>
          <div class="book bs2">${BUY.map(([a, p, c, v]) => html`<div class="br"><span>${a}</span><span class="v num ${c}">${p}</span><span class="v num y">${v}</span></div>`)}</div>
          <div class="redl"></div>
          <div class="st">${STATS.map((r) => html`<div class="sr"><span>${r[0]}</span><span class="v num ${r[2]}">${this.num(r[1])}</span><span class="l2">${r[3]}</span><span class="v num ${r[5]}">${this.num(r[4])}</span></div>`)}</div>
          <div class="redl"></div>
          <div class="st st2">${STATS2.map((r) => html`<div class="sr"><span>${r[0]}</span><span class="v num ${r[2]}">${this.num(r[1])}</span><span class="l2">${r[3]}</span><span class="v num ${r[5]}">${this.num(r[4])}</span></div>`)}</div>
          <div class="redl"></div>
          <div class="fl">${FLOW.map(([l, w, c, v, p]) => html`<div class="fr"><span>${l}</span><span class="fv"><i style="width:${w}px;background:${c === "g" ? "#00e000" : "#f03030"}"></i><span class="num ${c}">${this.num(v)}</span></span><span class="v num ${c}">${p}</span></div>`)}</div>
          <div class="redl"></div>
          <div class="ticks">${TICKS.map(([t, p, v, b, n]) => html`<div class="tr"><span class="tm">${t}</span><span class="v g">${p}</span><span class="v ${v === "8275" ? "m" : "y"}">${v}</span><span class="bs ${b === "B" ? "r" : "g"}">${b}</span><span class="ct">${n}</span></div>`)}</div>
        </div>
        <div class="side">
          ${ICONS.map((ic, i) => ic === null
            ? html`<div class=${i < 16 ? "sp1" : "sp2"}></div>`
            : html`<div class="si"><svg viewBox="0 0 28 28">${ic}</svg></div>`)}
          ${["1","5","15","30","60"].map((t) => html`<div class="si sn">${t}</div>`)}
          <div class="si sc sday">日</div>
          ${["周","月","N","多","季","年"].map((t) => html`<div class="si sc">${t}</div>`)}
        </div>
      </div>
      <div class="status">
        <i class="sti"></i>
        <span class="cjk" style="width:56px">上证</span>
        <span class="rn" style="width:102px">3054.64</span>
        <span class="rn" style="width:74px">16.41</span>
        <span class="rn" style="width:85px">0.54%</span>
        <span class="bk" style="width:96px">4059<u>亿</u></span>
        <span class="cjk" style="width:53px">深证</span>
        <span class="rn" style="width:102px">9612.75</span>
        <span class="rn" style="width:76px">57.33</span>
        <span class="rn" style="width:85px">0.60%</span>
        <span class="bk" style="width:98px">5386<u>亿</u></span>
        <span class="cjk" style="width:51px">中小</span>
        <span class="rn" style="width:102px">5900.43</span>
        <span class="rn" style="width:75px">30.85</span>
        <span class="rn" style="width:85px">0.53%</span>
        <span class="bk" style="width:98px">572.0<u>亿</u></span>
        <span class="bar"></span><span class="ind"></span>
      </div>
      <div class="wm">
        <span class="wmt">公式指标网</span>
        <svg class="wmi" viewBox="0 0 80 82">
          <path d=${logoArc(34, 165, 375)} fill="none" stroke="#d66a50" stroke-width="9"/>
          <path d=${logoArc(34, 15, 165)} fill="none" stroke="#ecca48" stroke-width="11"/>
          <rect x="24" y="16" width="32" height="52" fill="#ecca48"/>
          <rect x="24" y="32" width="32" height="4" fill="#86b0dd"/>
          <rect x="24" y="50" width="32" height="4" fill="#86b0dd"/>
          <path d="M33 2 H47 L44 14 H36 Z" fill="#ecca48"/>
          <rect x="38.5" y="16" width="3" height="60" fill="#a88a30"/>
        </svg>
        <span class="wmu">www.9m8.cn</span>
      </div>
    `;
  }
}
